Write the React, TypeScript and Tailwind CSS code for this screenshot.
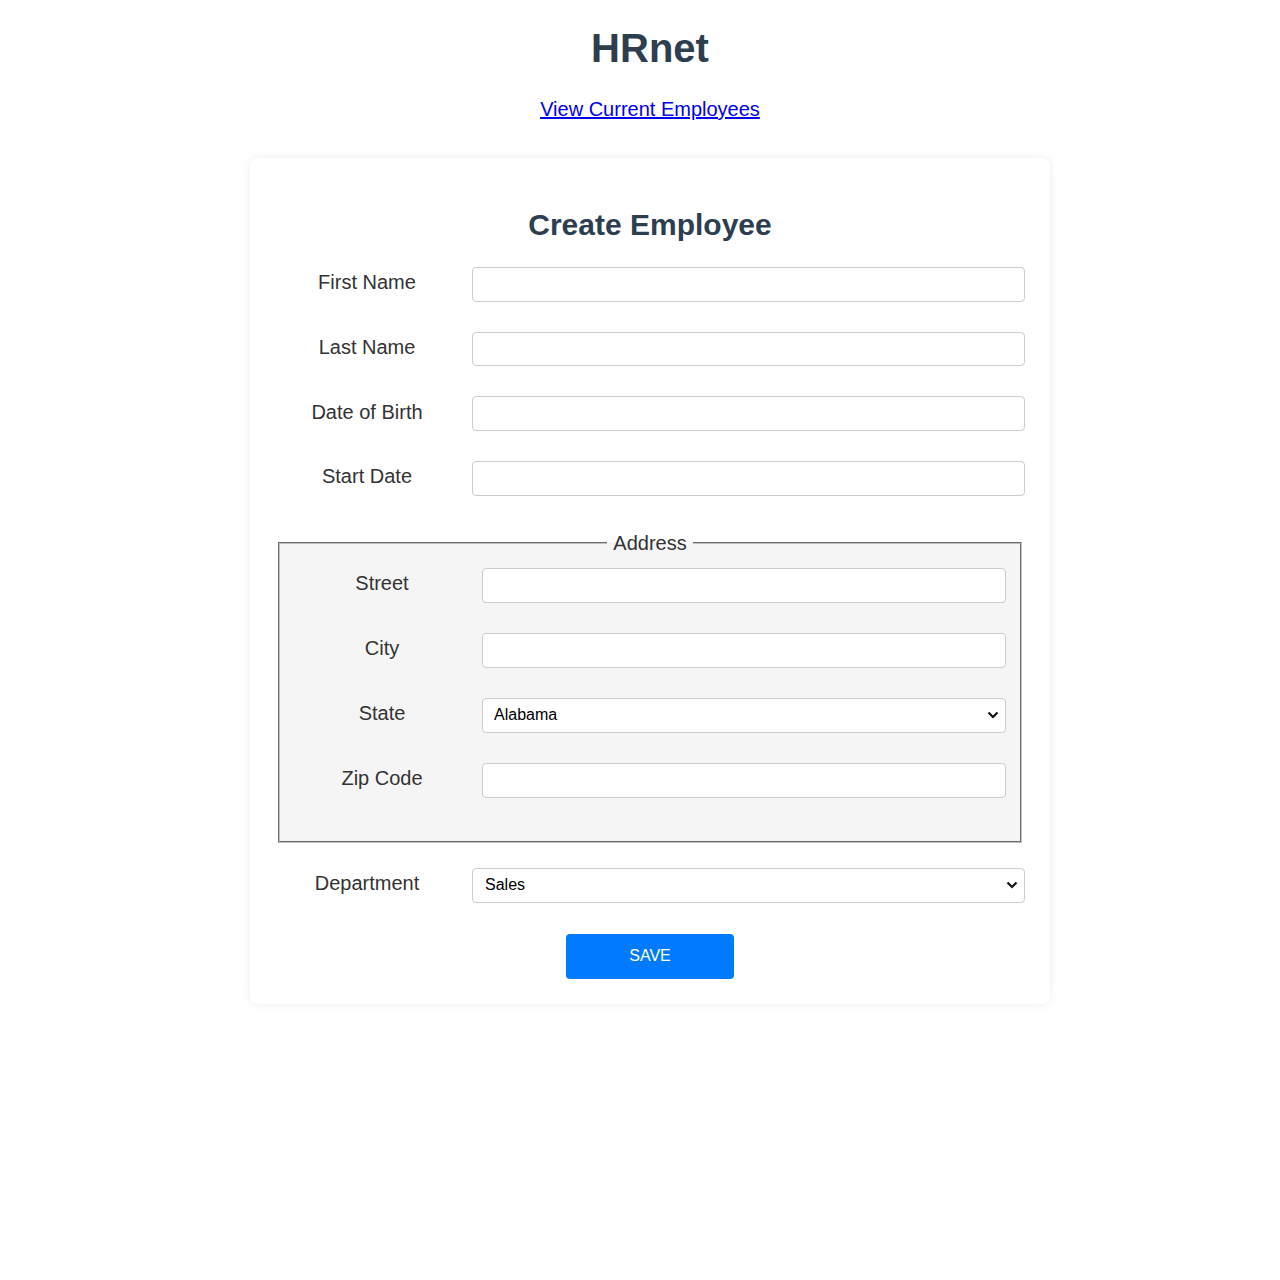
import React from 'react';

const Row = ({ label, children, labelW, h }: { label: string; children: React.ReactNode; labelW: string; h: string }) => (
  <div className={`flex ${h} items-center`}>
    <label className={`${labelW} -mt-[3px] shrink-0 text-center text-[20px] leading-[23px] text-[#333]`}>{label}</label>
    <div className="relative h-full flex-1">{children}</div>
  </div>
);

const inputCls = 'block h-full w-full rounded-[4px] border border-[#ccc] bg-white px-[10px] text-[16px] text-black outline-none';

const Chevron = () => (
  <svg className="pointer-events-none absolute right-[7px] top-1/2 -translate-y-1/2" width="12" height="8" viewBox="0 0 12 8">
    <polyline points="1.5,1.5 6,6 10.5,1.5" fill="none" stroke="#111" strokeWidth="2.2" />
  </svg>
);

const App = () => {
  const states = ['Alabama', 'Alaska', 'Arizona', 'Arkansas', 'California'];
  const departments = ['Sales', 'Marketing', 'Engineering', 'Human Resources', 'Legal'];

  return (
    <div className="min-h-screen bg-white pl-[20px] font-['Liberation_Sans',Arial,sans-serif]">
      <h1 className="pt-[25px] text-center text-[40px] font-bold leading-[46px] text-[#2c3e50]">HRnet</h1>
      <div className="mt-[27px] text-center leading-[23px]">
        <a href="#" className="text-[20px] text-[#0000ee] underline">
          View Current Employees
        </a>
      </div>

      <form className="mx-auto mt-[36px] w-[800px] rounded-lg bg-white px-[25px] pb-[25px] pt-[50px] shadow-[0_0_10px_rgba(0,0,0,0.08)]">
        <h2 className="mb-[25px] text-center text-[30px] font-bold leading-[34px] text-[#2c3e50]">Create Employee</h2>

        <div className="flex flex-col gap-[30px]">
          {['First Name', 'Last Name', 'Date of Birth', 'Start Date'].map((l) => (
            <Row key={l} label={l} labelW="w-[184px] mr-[13px]" h="h-[34.67px]">
              <input className={inputCls} />
            </Row>
          ))}
        </div>

        <fieldset className="mx-[3px] mt-[36px] border-2 border-[#c0c0c0] bg-[#f5f5f5] pb-[43px] pl-[14px] pr-[14px] pt-[13px] [border-style:groove]">
          <legend className="mx-auto px-[6px] text-[20px] leading-[23px] text-[#333]">Address</legend>
          <div className="flex flex-col gap-[30px]">
            <Row label="Street" labelW="w-[176px] mr-[12px]" h="h-[35px]">
              <input className={inputCls} />
            </Row>
            <Row label="City" labelW="w-[176px] mr-[12px]" h="h-[35px]">
              <input className={inputCls} />
            </Row>
            <Row label="State" labelW="w-[176px] mr-[12px]" h="h-[35px]">
              <select className={`${inputCls} appearance-none pl-[11px]`} defaultValue="Alabama">
                {states.map((s) => (
                  <option key={s}>{s}</option>
                ))}
              </select>
              <Chevron />
            </Row>
            <Row label="Zip Code" labelW="w-[176px] mr-[12px]" h="h-[35px]">
              <input className={inputCls} />
            </Row>
          </div>
        </fieldset>

        <div className="mt-[25px]">
          <Row label="Department" labelW="w-[184px] mr-[13px]" h="h-[35px]">
            <select className={`${inputCls} appearance-none pl-[12px]`} defaultValue="Sales">
              {departments.map((d) => (
                <option key={d}>{d}</option>
              ))}
            </select>
            <Chevron />
          </Row>
        </div>

        <div className="mt-[31px] flex justify-center">
          <button type="button" className="h-[45px] w-[168px] rounded-[4px] bg-[#007bff] text-[16px] text-white">
            SAVE
          </button>
        </div>
      </form>
    </div>
  );
};

export default App;
